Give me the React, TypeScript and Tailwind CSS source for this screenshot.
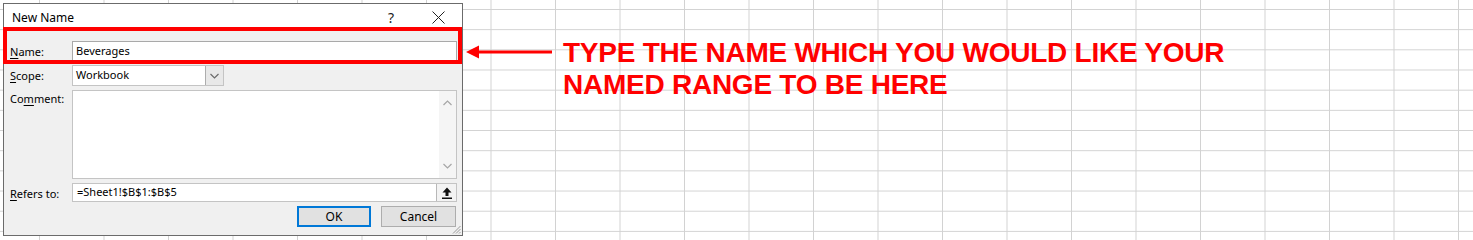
import React from 'react';

const ui = "font-['Noto_Sans','Open_Sans',sans-serif]";

const Label = ({ pre, key1, post }: { pre: string; key1: string; post: string }) => (
  <span className="text-[11px] leading-[16px] text-black">
    {pre}
    <u className="underline-offset-2">{key1}</u>
    {post}
  </span>
);

const Chevron = ({ up = false, color = '#a6a6a6' }: { up?: boolean; color?: string }) => (
  <svg width="9" height="6" viewBox="0 0 9 6" className="block">
    <path d={up ? 'M0.5 5 L4.5 1 L8.5 5' : 'M0.5 1 L4.5 5 L8.5 1'} fill="none" stroke={color} strokeWidth="1.2" />
  </svg>
);

const NewNameDialog = () => {
  return (
    <div className={`relative ml-[3px] mt-[3px] w-[460px] h-[233px] border border-[#6b6b6b] bg-[#f0f0f0] shrink-0 ${ui}`}>
      {/* title bar */}
      <div className="h-[27px] bg-white flex items-center pl-[8px]">
        <span className="text-[12px] text-black flex-1">New Name</span>
        <span className="text-[14px] text-[#222] w-[10px] mr-[34px]">?</span>
        <svg width="13" height="13" viewBox="0 0 13 13" className="mr-[17px]">
          <path d="M0.5 0.5 L12.5 12.5 M12.5 0.5 L0.5 12.5" stroke="#222" strokeWidth="1" />
        </svg>
      </div>

      <div className="flex flex-col gap-[4px] pt-[10px] pl-[6px] pr-[5px]">
        {/* Name */}
        <div className="flex items-center h-[20px]">
          <div className="w-[62px] -mt-[3px]">
            <Label pre="" key1="N" post="ame:" />
          </div>
          <div className="flex-1 h-full border border-[#a9a9a9] bg-white flex items-center px-[3px] text-[11px] text-black">
            Beverages
          </div>
        </div>

        {/* Scope */}
        <div className="flex items-center h-[21px]">
          <div className="w-[62px] -mt-[3px]">
            <Label pre="" key1="S" post="cope:" />
          </div>
          <div className="w-[152px] h-full border border-[#c4c4c4] bg-white flex items-center">
            <span className="flex-1 px-[3px] text-[11px] text-black">Workbook</span>
            <div className="w-[18px] h-full border-l border-[#adadad] bg-[#e8e8e8] flex items-center justify-center">
              <Chevron color="#6a6a6a" />
            </div>
          </div>
        </div>

        {/* Comment */}
        <div className="flex items-start h-[89px]">
          <div className="w-[62px] leading-[16px] -mt-[1px]">
            <Label pre="Co" key1="m" post="ment:" />
          </div>
          <div className="flex-1 h-full border border-[#c4c4c4] bg-white flex justify-end">
            <div className="w-[17px] h-full bg-[#f5f5f5] flex flex-col items-center justify-between py-[9px]">
              <Chevron up />
              <Chevron />
            </div>
          </div>
        </div>

        {/* Refers to */}
        <div className="flex items-center h-[19px]">
          <div className="w-[62px] -mt-[2px]">
            <Label pre="" key1="R" post="efers to:" />
          </div>
          <div className="flex-1 h-full border border-[#c4c4c4] bg-white flex items-center">
            <span className="flex-1 px-[4px] text-[11px] text-black">=Sheet1!$B$1:$B$5</span>
            <div className="w-[20px] h-full border-l border-[#b8b8b8] bg-[#f3f3f3] flex items-center justify-center">
              <svg width="10" height="12" viewBox="0 0 10 12">
                <path d="M5 0.5 L9.5 5.5 L6.5 5.5 L6.5 9 L3.5 9 L3.5 5.5 L0.5 5.5 Z" fill="#111" />
                <rect x="0" y="10.5" width="10" height="1.5" fill="#111" />
              </svg>
            </div>
          </div>
        </div>

        {/* buttons */}
        <div className="flex justify-end gap-[10px] pr-[1px]">
          <button className="w-[74px] h-[21px] border-2 border-[#0078d7] bg-[#e1e1e1] text-[12px] text-black flex items-center justify-center">
            OK
          </button>
          <button className="w-[75px] h-[21px] border border-[#adadad] bg-[#e1e1e1] text-[12px] text-black flex items-center justify-center">
            Cancel
          </button>
        </div>
      </div>

      {/* resize grip */}
      <svg width="9" height="9" viewBox="0 0 9 9" className="absolute right-[1px] bottom-[1px]">
        <path d="M8.5 1 L1 8.5 M8.5 4 L4 8.5 M8.5 7 L7 8.5" stroke="#9a9a9a" strokeWidth="1" />
      </svg>

      {/* highlight box */}
      <div className="absolute -left-[1px] top-[23px] w-[459px] h-[37px] border-[4px] border-[#ff0000] pointer-events-none" />
    </div>
  );
};

export default function App() {
  return (
    <div className="w-[1473px] h-[240px] overflow-hidden bg-white bg-[linear-gradient(to_right,#d2d2d2_1px,transparent_1px),linear-gradient(to_bottom,#d2d2d2_1px,transparent_1px)] bg-[size:64.5px_20.18px] bg-[position:39px_9px] flex items-start">
      <NewNameDialog />

      <div className="flex items-start">
        <svg width="86" height="14" viewBox="0 0 86 14" className="ml-[3px] mt-[45px] shrink-0">
          <path d="M0 7 L13 0.5 L13 13.5 Z" fill="#ff0000" />
          <rect x="10" y="5.5" width="76" height="3" fill="#ff0000" />
        </svg>
        <p className="ml-[11px] mt-[37px] font-['Liberation_Sans',Arial,sans-serif] font-bold text-[28px] tracking-[-0.25px] leading-[32px] text-[#ff0000] whitespace-nowrap">
          TYPE THE NAME WHICH YOU WOULD LIKE YOUR
          <br />
          NAMED RANGE TO BE HERE
        </p>
      </div>
    </div>
  );
}
